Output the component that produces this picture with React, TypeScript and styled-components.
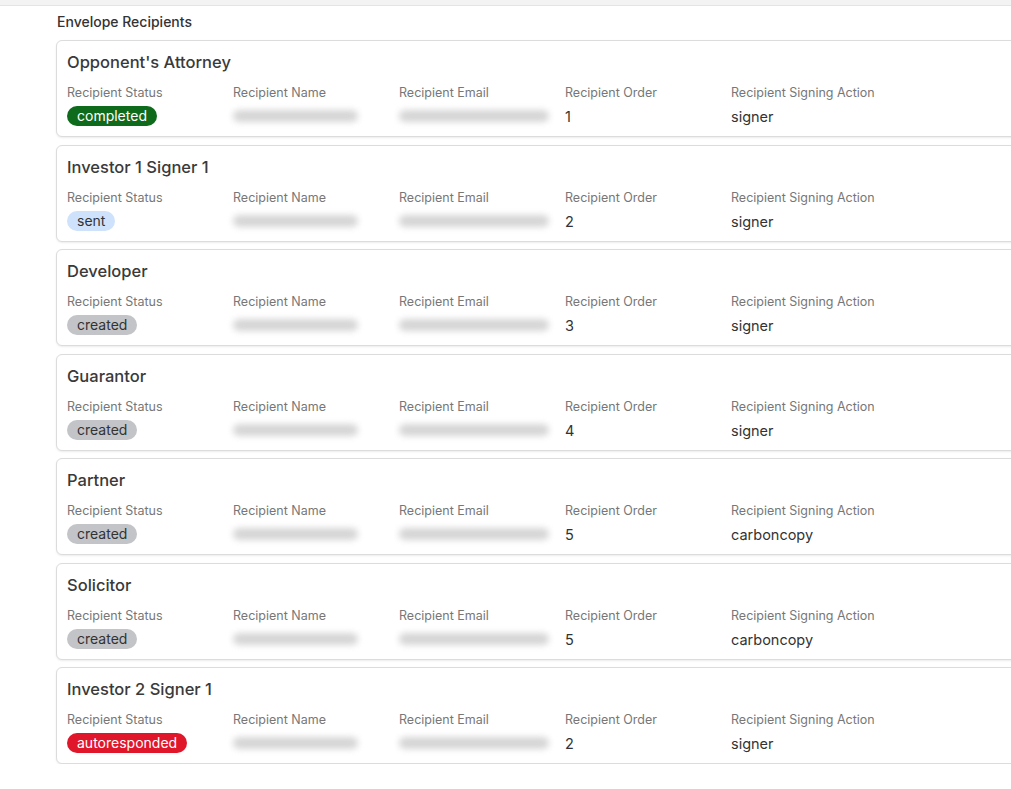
import React from "react";
import styled, { createGlobalStyle } from "styled-components";

const Global = createGlobalStyle`
  body { margin: 0; background: #fff; font-family: "Inter", "Liberation Sans", sans-serif; overflow: hidden; }
`;
const TopBar = styled.div`height: 5px; background: #f3f3f3; border-bottom: 1px solid #e4e4e4;`;
const Page = styled.div`padding: 8px 0 0 56px; width: 1000px;`;
const Heading = styled.div`font-size: 14px; font-weight: 500; color: #333; margin: 0 0 10px 1px; line-height: 16px;`;
const List = styled.div`display: flex; flex-direction: column; gap: 7.5px;`;
const Card = styled.div`
  border: 1px solid #dcdcdc; border-radius: 6px; height: 97px; box-sizing: border-box;
  padding: 11px 10px 0 10px; box-shadow: 0 1px 2px rgba(0,0,0,0.08); background: #fff;
`;
const Title = styled.div`font-size: 16.5px; font-weight: 500; color: #3a3a3a; line-height: 20px;`;
const Grid = styled.div`display: grid; grid-template-columns: repeat(5, 166px); margin-top: 13px;`;
const Label = styled.div`font-size: 12.5px; color: #777; line-height: 15px;`;
const Value = styled.div`font-size: 14.5px; color: #333; line-height: 20px; margin-top: 7px; height: 20px;`;
const Blur = styled.div`margin-top: 10px; width: 125px; height: 12px; background: #c8c8c8; border-radius: 6px; filter: blur(3px); opacity: .75;`;
const colors: Record<string, [string, string]> = {
  completed: ["#0f6b1c", "#fff"],
  sent: ["#cfe2fb", "#333"],
  created: ["#c2c4c7", "#333"],
  autoresponded: ["#e0162b", "#fff"],
};
const Badge = styled.span<{ $s: string }>`
  display: inline-block; margin-top: 6px; padding: 0 10px; border-radius: 10px; font-size: 14px; line-height: 20px;
  background: ${p => colors[p.$s][0]}; color: ${p => colors[p.$s][1]};
`;

const rows = [
  ["Opponent's Attorney", "completed", "1", "signer"],
  ["Investor 1 Signer 1", "sent", "2", "signer"],
  ["Developer", "created", "3", "signer"],
  ["Guarantor", "created", "4", "signer"],
  ["Partner", "created", "5", "carboncopy"],
  ["Solicitor", "created", "5", "carboncopy"],
  ["Investor 2 Signer 1", "autoresponded", "2", "signer"],
];

export default function App() {
  return (
    <>
      <Global />
      <TopBar />
      <Page>
        <Heading>Envelope Recipients</Heading>
        <List>
          {rows.map(([t, s, o, a]) => (
            <Card key={t}>
              <Title>{t}</Title>
              <Grid>
                <div><Label>Recipient Status</Label><Badge $s={s}>{s}</Badge></div>
                <div><Label>Recipient Name</Label><Blur /></div>
                <div><Label>Recipient Email</Label><Blur style={{ width: 150 }} /></div>
                <div><Label>Recipient Order</Label><Value>{o}</Value></div>
                <div><Label>Recipient Signing Action</Label><Value>{a}</Value></div>
              </Grid>
            </Card>
          ))}
        </List>
      </Page>
    </>
  );
}
